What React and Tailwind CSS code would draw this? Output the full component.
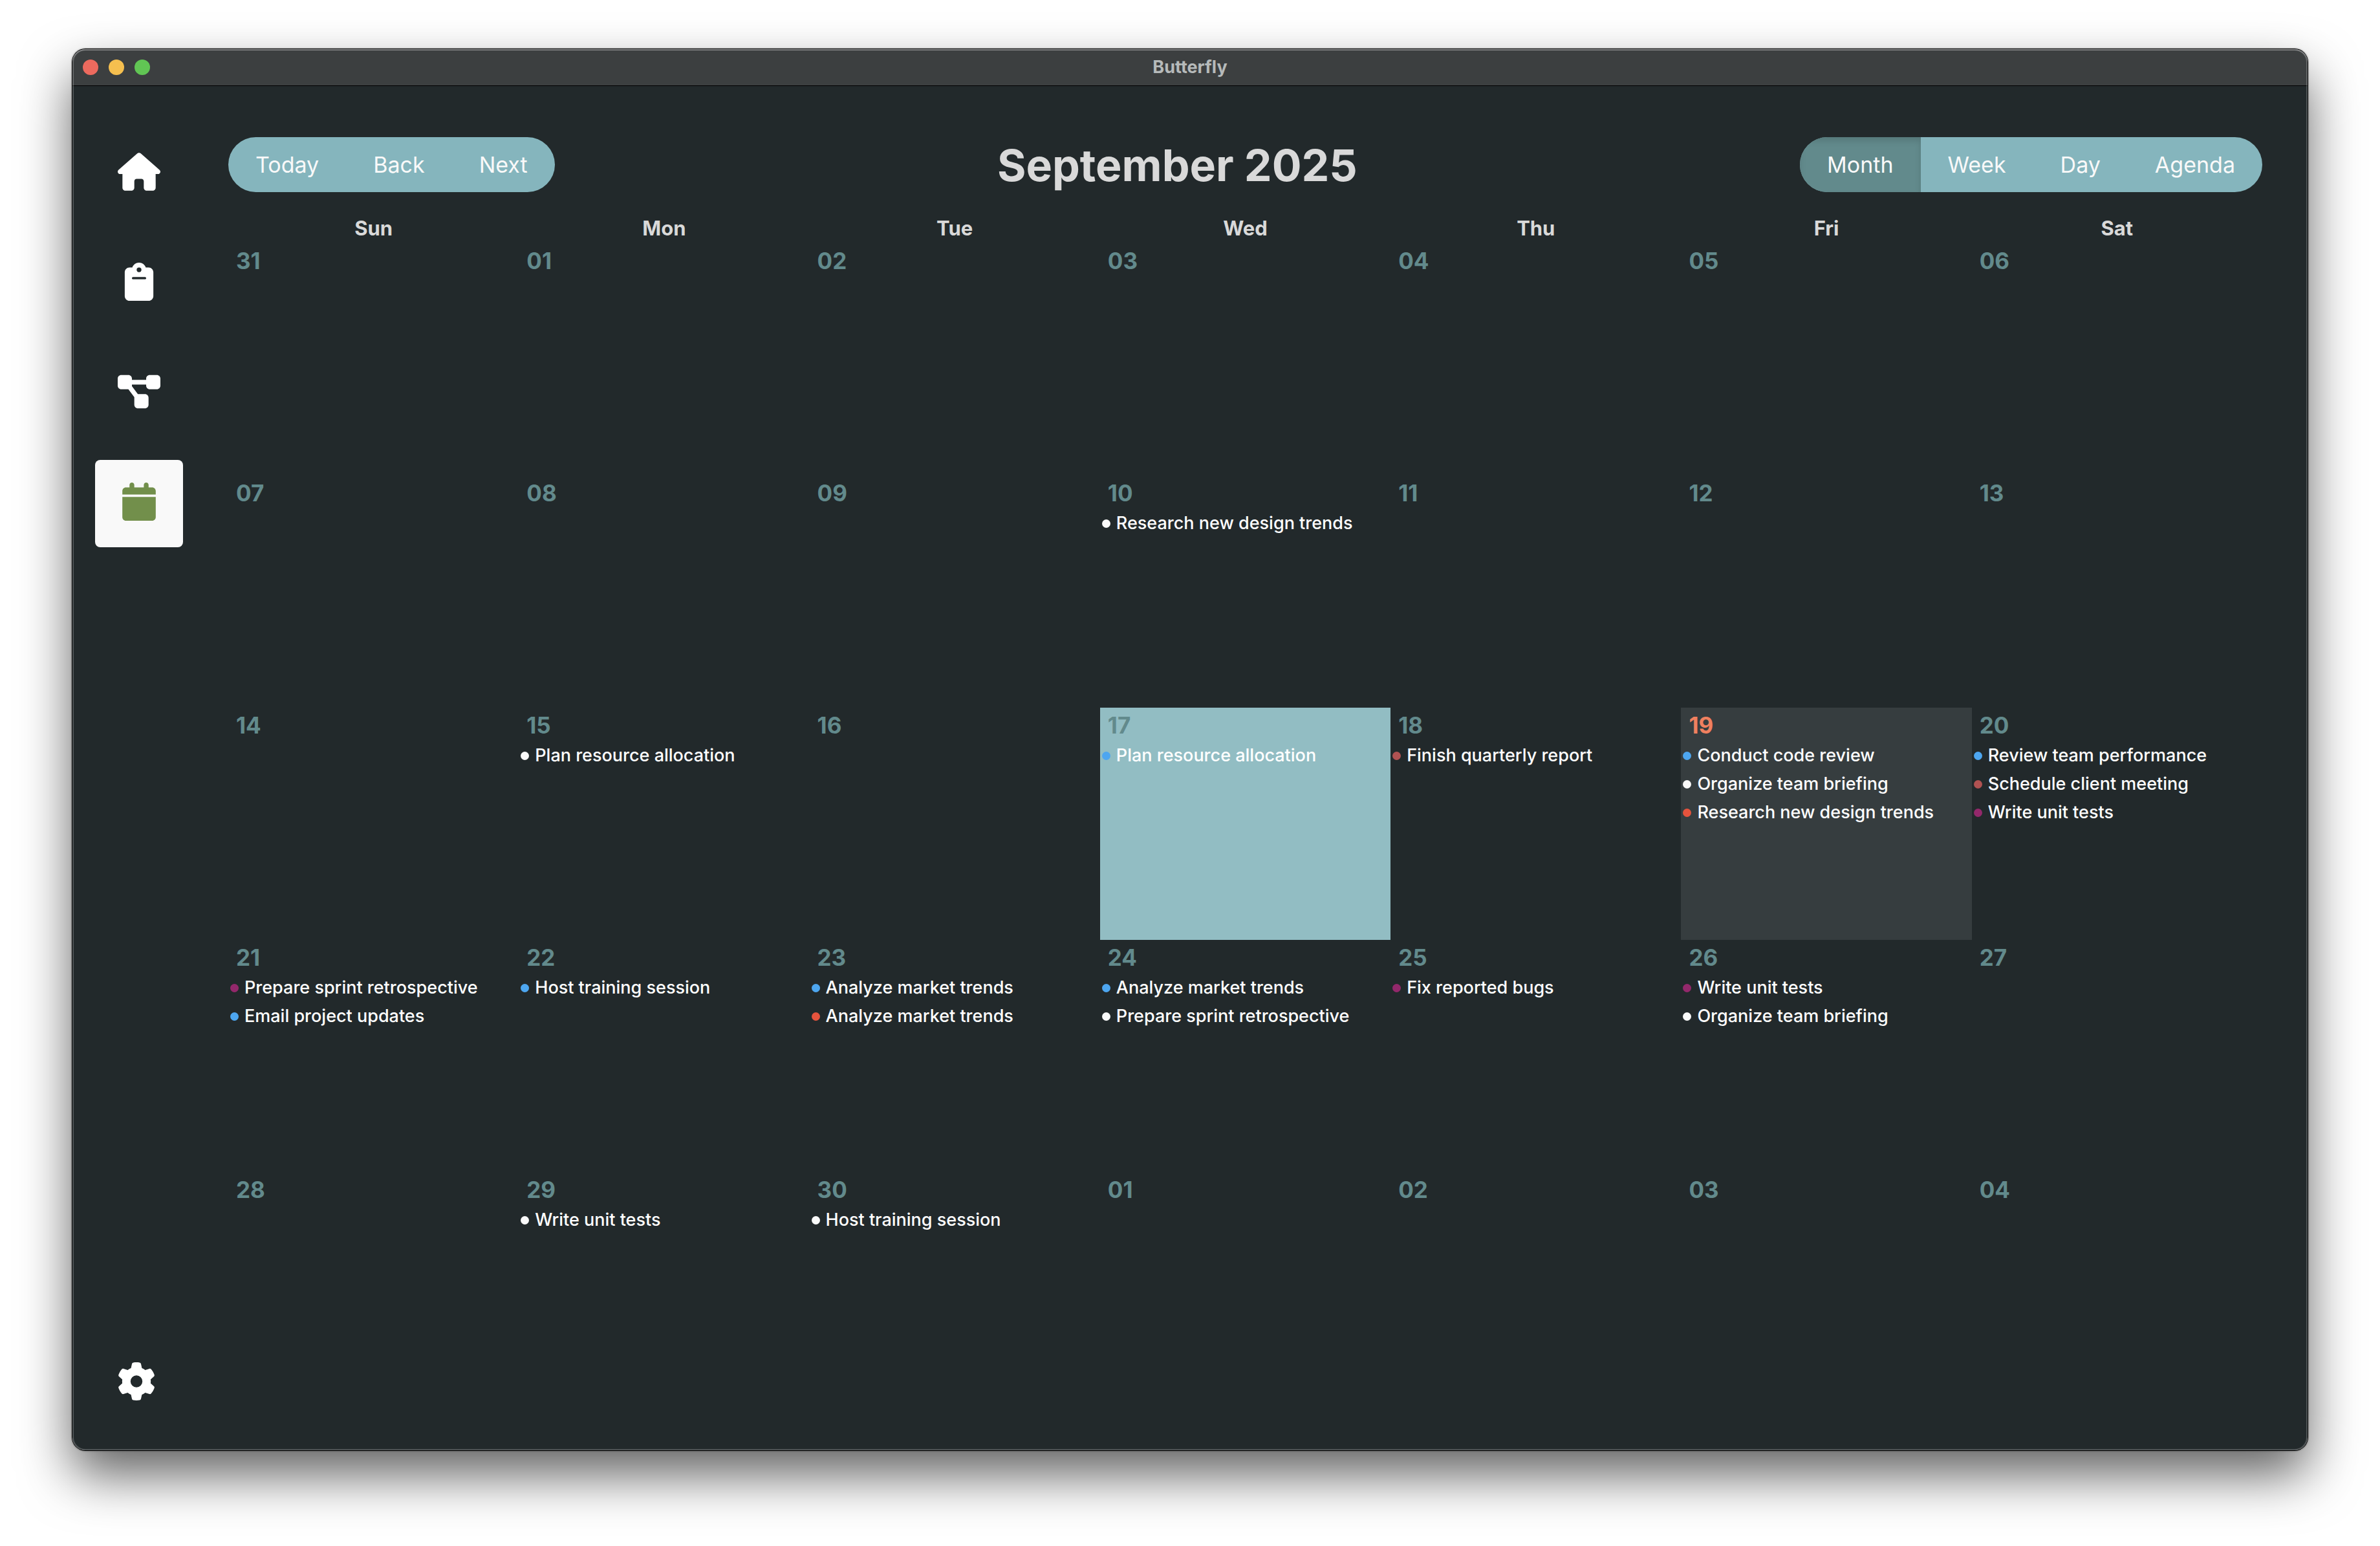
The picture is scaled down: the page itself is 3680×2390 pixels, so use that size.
import React, { useState } from "react";
import { FaHouse, FaClipboard, FaDiagramProject, FaCalendar, FaGear } from "react-icons/fa6";

const BLUE = "bg-[#4da6f0]";
const WHITE = "bg-[#fafafa]";
const BRICK = "bg-[#b05252]";
const RED = "bg-[#e5533d]";
const PURPLE = "bg-[#93286b]";

const WEEKDAYS = ["Sun", "Mon", "Tue", "Wed", "Thu", "Fri", "Sat"];

const WEEKS = [
  [
    { day: "31" },
    { day: "01" },
    { day: "02" },
    { day: "03" },
    { day: "04" },
    { day: "05" },
    { day: "06" },
  ],
  [
    { day: "07" },
    { day: "08" },
    { day: "09" },
    { day: "10", events: [[WHITE, "Research new design trends"]] },
    { day: "11" },
    { day: "12" },
    { day: "13" },
  ],
  [
    { day: "14" },
    { day: "15", events: [[WHITE, "Plan resource allocation"]] },
    { day: "16" },
    { day: "17", state: "selected", events: [[BLUE, "Plan resource allocation"]] },
    { day: "18", events: [[BRICK, "Finish quarterly report"]] },
    {
      day: "19",
      state: "today",
      events: [
        [BLUE, "Conduct code review"],
        [WHITE, "Organize team briefing"],
        [RED, "Research new design trends"],
      ],
    },
    {
      day: "20",
      events: [
        [BLUE, "Review team performance"],
        [BRICK, "Schedule client meeting"],
        [PURPLE, "Write unit tests"],
      ],
    },
  ],
  [
    {
      day: "21",
      events: [
        [PURPLE, "Prepare sprint retrospective"],
        [BLUE, "Email project updates"],
      ],
    },
    { day: "22", events: [[BLUE, "Host training session"]] },
    {
      day: "23",
      events: [
        [BLUE, "Analyze market trends"],
        [RED, "Analyze market trends"],
      ],
    },
    {
      day: "24",
      events: [
        [BLUE, "Analyze market trends"],
        [WHITE, "Prepare sprint retrospective"],
      ],
    },
    { day: "25", events: [[PURPLE, "Fix reported bugs"]] },
    {
      day: "26",
      events: [
        [PURPLE, "Write unit tests"],
        [WHITE, "Organize team briefing"],
      ],
    },
    { day: "27" },
  ],
  [
    { day: "28" },
    { day: "29", events: [[WHITE, "Write unit tests"]] },
    { day: "30", events: [[WHITE, "Host training session"]] },
    { day: "01" },
    { day: "02" },
    { day: "03" },
    { day: "04" },
  ],
];

const CELL_BG = {
  selected: "bg-[#92bdc3]",
  today: "bg-[#363d3f]",
};

function TitleBar() {
  return (
    <header className="grid h-[57px] shrink-0 grid-cols-[1fr_auto_1fr] items-center border-b border-black bg-[#3c3f40] px-4">
      <div className="flex gap-4">
        <button aria-label="Close" className="size-6 rounded-full bg-[#ed6a5e]" />
        <button aria-label="Minimize" className="size-6 rounded-full bg-[#f5bf4f]" />
        <button aria-label="Zoom" className="size-6 rounded-full bg-[#61c554]" />
      </div>
      <div className="text-[27px] leading-[38px] font-bold text-[#b6baba]">Butterfly</div>
    </header>
  );
}

function NavButton({ label, icon: Icon, active }) {
  return (
    <button
      aria-label={label}
      aria-current={active ? "page" : undefined}
      className={
        active
          ? "flex h-[135px] w-[136px] items-center justify-center rounded-lg bg-[#f9f9f9] pb-[7px] text-[#728f4b]"
          : "flex h-[135px] w-[136px] items-center justify-center rounded-lg pb-[7px] text-white"
      }
    >
      <Icon className="h-[59px] w-[66px]" />
    </button>
  );
}

function Sidebar() {
  return (
    <nav className="flex w-[241px] shrink-0 flex-col gap-[35px] pt-[68px] pb-9 pl-[35px]">
      <NavButton label="Home" icon={FaHouse} />
      <NavButton label="Tasks" icon={FaClipboard} />
      <NavButton label="Projects" icon={FaDiagramProject} />
      <NavButton label="Calendar" icon={FaCalendar} active />
      <button
        aria-label="Settings"
        className="mt-auto flex h-[135px] w-32 items-center justify-center pb-[7px] text-white"
      >
        <FaGear className="h-[59px] w-[66px]" />
      </button>
    </nav>
  );
}

function ButtonGroup({ items, active, onSelect }) {
  return (
    <div className="flex overflow-hidden rounded-full bg-[#85b5bd]">
      {items.map((item) => (
        <button
          key={item}
          onClick={() => onSelect && onSelect(item)}
          aria-pressed={active ? item === active : undefined}
          className={
            item === active
              ? "h-[85px] bg-[#628a8c] px-[42px] text-[34px] leading-[48px] text-[#f9f9f9] shadow-[inset_0_6px_10px_rgba(0,0,0,0.125)]"
              : "h-[85px] px-[42px] text-[34px] leading-[48px] text-[#f9f9f9]"
          }
        >
          {item}
        </button>
      ))}
    </div>
  );
}

function DayCell({ day, state, events = [] }) {
  return (
    <td className={`flex min-w-0 flex-col items-start pt-[3px] ${CELL_BG[state] || ""}`}>
      <button
        className={
          state === "today"
            ? "mb-px px-3 text-[35px] leading-[48px] font-bold text-[#f0805f]"
            : "mb-px px-3 text-[35px] leading-[48px] font-bold text-[#628a8c]"
        }
      >
        {day}
      </button>
      {events.map(([dot, title]) => (
        <button
          key={dot + title}
          className="flex max-w-full items-center gap-[9px] pl-[3px] text-left text-[27px] leading-[44px] font-medium text-white"
        >
          <span className={`size-[13px] shrink-0 rounded-full ${dot}`} />
          <span className="truncate">{title}</span>
        </button>
      ))}
    </td>
  );
}

export default function App() {
  const [view, setView] = useState("Month");
  return (
    <div className="flex min-h-screen overflow-hidden bg-white px-28 pt-[76px] pb-[148px] font-[Inter,sans-serif]">
      <div className="relative flex flex-1 rounded-[20px] shadow-[0_0_0_1px_#000,0_0_2px_2px_rgba(0,0,0,0.2),0_38px_80px_rgba(0,0,0,0.62)]">
        <div className="flex flex-1 flex-col overflow-hidden rounded-[20px] bg-[#22292b]">
          <TitleBar />
          <div className="flex flex-1">
            <Sidebar />
            <main className="flex min-w-0 flex-1 flex-col pt-[79px] pr-[70px] pb-[71px]">
              <div className="flex items-center justify-between">
                <ButtonGroup items={["Today", "Back", "Next"]} />
                <h1 className="flex-1 text-center text-[68px] leading-[84px] font-bold text-[#d9d9d9]">
                  September 2025
                </h1>
                <ButtonGroup items={["Month", "Week", "Day", "Agenda"]} active={view} onSelect={setView} />
              </div>
              <table className="mt-8 flex flex-1 flex-col">
                <thead className="block">
                  <tr className="grid grid-cols-7">
                    {WEEKDAYS.map((name) => (
                      <th key={name} scope="col" className="text-[31px] leading-[47px] font-bold text-[#d9d9d9]">
                        {name}
                      </th>
                    ))}
                  </tr>
                </thead>
                <tbody className="grid flex-1 auto-rows-fr">
                  {WEEKS.map((week) => (
                    <tr key={week[0].day} className="grid grid-cols-7">
                      {week.map((cell) => (
                        <DayCell key={cell.day} {...cell} />
                      ))}
                    </tr>
                  ))}
                </tbody>
              </table>
            </main>
          </div>
        </div>
        <div className="pointer-events-none absolute inset-0 rounded-[20px] shadow-[inset_0_0_0_2px_rgba(255,255,255,0.2),inset_0_2px_0_rgba(255,255,255,0.2)]" />
      </div>
    </div>
  );
}
